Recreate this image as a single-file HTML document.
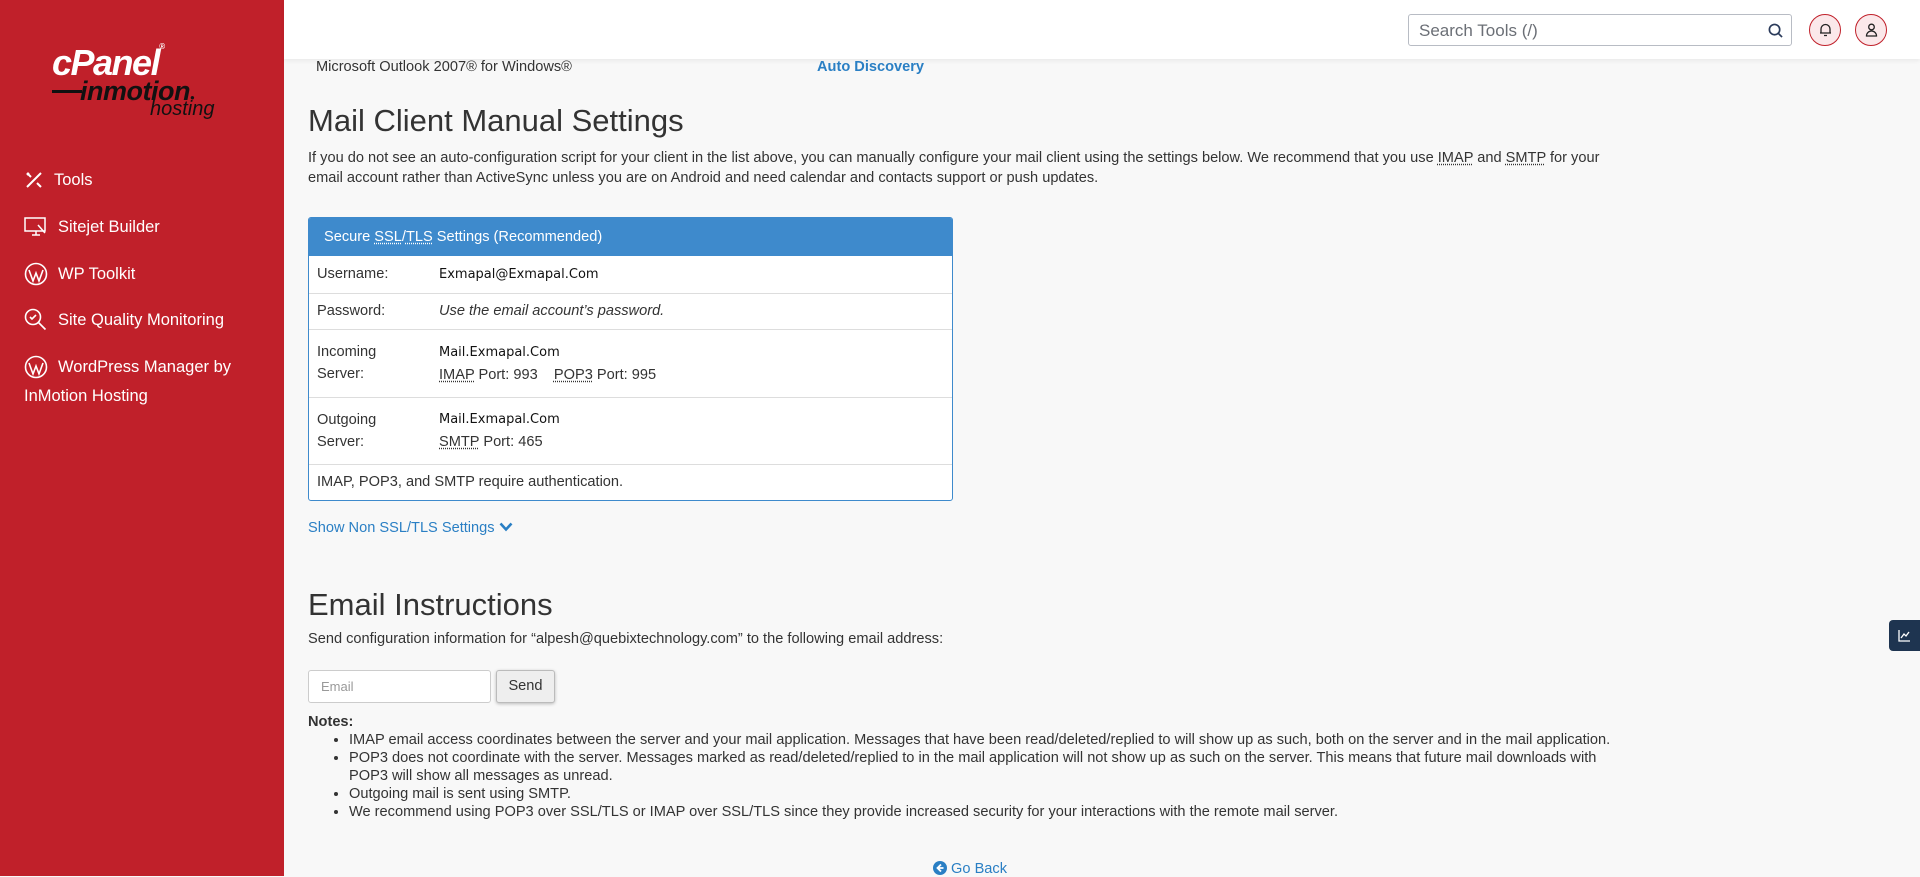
<!DOCTYPE html>
<html><head><meta charset="utf-8"><style>
*{box-sizing:border-box;margin:0;padding:0}
body{width:1920px;height:876px;overflow:hidden;background:#f8f8f8;font-family:"Liberation Sans","DejaVu Sans",sans-serif;color:#333;font-size:14.6px;position:relative}
.side{position:absolute;left:0;top:0;width:284px;height:876px;background:#c0202a;color:#fff}
.logo{position:absolute;left:52px;top:42px}
.nav{position:absolute;left:24px;font-size:16.5px;color:#fff;display:flex;align-items:center}
.nav svg{margin-right:10px}
.top{position:absolute;left:284px;top:0;right:0;height:59px;background:#fff;box-shadow:0 2px 4px rgba(0,0,0,.06)}
.search{position:absolute;top:14px;width:384px;height:32px;border:1px solid #b8bcc4;border-radius:3px;background:#fff;font-size:17px;color:#6b6f76;padding:6px 10px}
.circ{position:absolute;top:14px;width:32px;height:32px;border-radius:50%;border:1px solid #c0202a;background:#fbe8ea}
.main{position:absolute;left:308px;top:0;width:1320px}
a{color:#2a7fc4;text-decoration:none}
abbr{text-decoration:underline dotted;text-underline-offset:2px}
h1,h2{font-weight:normal;font-size:31px;color:#333;position:absolute;left:0}
table{border-collapse:collapse;width:100%}
.panel{position:absolute;left:0;top:217px;width:645px;border:1px solid #3e8acc;border-radius:3px;background:#fff;overflow:hidden}
.ph{background:#3e8acc;color:#fff;height:38px;line-height:38px;padding-left:15px;font-size:14.6px}
td{border-top:1px solid #ddd;padding:0 8px;font-size:14.6px;vertical-align:middle}
td.l{width:122px;color:#333}
.v{font-family:"DejaVu Sans",sans-serif;font-size:13px;color:#111}
.notes li{margin-left:41px;line-height:18px}
</style></head><body>
<div class="side">
 <div class="logo">
  <div style="font:italic bold 36px 'Liberation Sans',sans-serif;color:#fff;letter-spacing:-1.5px">cPanel<span style="font-size:8px;vertical-align:top">®</span></div>
  <div style="position:relative;font:italic bold 27px 'Liberation Sans',sans-serif;color:#111;margin-left:28px;margin-top:-8px;letter-spacing:-0.5px"><span style="position:absolute;left:-28px;top:14px;width:30px;height:3px;background:#111"></span>inmotion<span style="font-size:8px">●</span></div>
  <div style="font:italic 20px 'Liberation Sans',sans-serif;color:#111;margin-left:98px;margin-top:-9px">hosting</div>
 </div>
 <div class="nav" style="top:170px"><svg width="20" height="20" viewBox="0 0 20 20" fill="none" stroke="#fff" stroke-width="2"><path d="M3 17L17 3M3 3l4 4M13 13l4 4M5 3l-2 2"/></svg>Tools</div>
 <div class="nav" style="top:216px"><svg width="24" height="22" viewBox="0 0 24 22" fill="none" stroke="#fff" stroke-width="1.5"><rect x="1" y="2" width="20" height="13"/><path d="M8 19h8M12 15v4M14 9l7 8"/></svg>Sitejet Builder</div>
 <div class="nav" style="top:262px"><svg width="24" height="24" viewBox="0 0 24 24" fill="none" stroke="#fff" stroke-width="1.6"><circle cx="12" cy="12" r="10.5"/><path d="M5 8l4 11 3-8 3 8 4-11"/></svg>WP Toolkit</div>
 <div class="nav" style="top:308px"><svg width="24" height="24" viewBox="0 0 24 24" fill="none" stroke="#fff" stroke-width="1.6"><circle cx="9" cy="9" r="7.5"/><path d="M14.5 14.5l7 7M6 9l2 2 4-4"/></svg>Site Quality Monitoring</div>
 <div class="nav" style="top:355px"><svg width="24" height="24" viewBox="0 0 24 24" fill="none" stroke="#fff" stroke-width="1.6"><circle cx="12" cy="12" r="10.5"/><path d="M5 8l4 11 3-8 3 8 4-11"/></svg>WordPress Manager by</div>
 <div class="nav" style="top:387px">InMotion Hosting</div>
</div>
<div class="top">
 <div class="search" style="left:1124px">Search Tools (/)<svg style="position:absolute;right:8px;top:8px" width="15" height="15" viewBox="0 0 16 16" fill="none" stroke="#2a3a5a" stroke-width="1.8"><circle cx="7" cy="7" r="5.5"/><path d="M11 11l4 4"/></svg></div>
 <div class="circ" style="left:1525px"><svg style="margin:8px 0 0 9px" width="13" height="14" viewBox="0 0 13 14" fill="none" stroke="#222" stroke-width="1.3"><path d="M2 10V6a4.5 4.5 0 019 0v4zM1 10h11M5 12.5h3"/></svg></div>
 <div class="circ" style="left:1571px"><svg style="margin:8px 0 0 9px" width="13" height="14" viewBox="0 0 13 14" fill="none" stroke="#222" stroke-width="1.3"><circle cx="6.5" cy="4" r="2.8"/><path d="M1.5 13a5 5 0 0110 0z"/></svg></div>
</div>
<div class="main">
 <div style="position:absolute;left:8px;top:59px">Microsoft Outlook 2007® for Windows®</div>
 <div style="position:absolute;left:509px;top:59px;font-weight:bold"><a>Auto Discovery</a></div>
 <h1 style="top:103px">Mail Client Manual Settings</h1>
 <p style="position:absolute;top:148px;line-height:20px;width:1320px">If you do not see an auto-configuration script for your client in the list above, you can manually configure your mail client using the settings below. We recommend that you use <abbr>IMAP</abbr> and <abbr>SMTP</abbr> for your email account rather than ActiveSync unless you are on Android and need calendar and contacts support or push updates.</p>
 <div class="panel">
  <div class="ph">Secure <abbr>SSL</abbr>/<abbr>TLS</abbr> Settings (Recommended)</div>
  <table>
   <tr style="height:37px"><td class="l" style="border-top:0">Username:</td><td class="v" style="border-top:0">Exmapal@Exmapal.Com</td></tr>
   <tr style="height:36px"><td class="l">Password:</td><td style="font-style:italic">Use the email account’s password.</td></tr>
   <tr style="height:68px"><td class="l" style="line-height:22px">Incoming<br>Server:</td><td style="line-height:22px"><span class="v">Mail.Exmapal.Com</span><br><abbr>IMAP</abbr> Port: 993 &nbsp;&nbsp; <abbr>POP3</abbr> Port: 995</td></tr>
   <tr style="height:67px"><td class="l" style="line-height:22px">Outgoing<br>Server:</td><td style="line-height:22px"><span class="v">Mail.Exmapal.Com</span><br><abbr>SMTP</abbr> Port: 465</td></tr>
   <tr style="height:36px"><td colspan="2">IMAP, POP3, and SMTP require authentication.</td></tr>
  </table>
 </div>
 <div style="position:absolute;top:520px"><a>Show Non SSL/TLS Settings <svg width="14" height="10" viewBox="0 0 14 10" fill="none" stroke="#2a7fc4" stroke-width="2.6"><path d="M1.5 1.5l5.5 6 5.5-6"/></svg></a></div>
 <h2 style="top:587px">Email Instructions</h2>
 <div style="position:absolute;top:631px">Send configuration information for “alpesh@quebixtechnology.com” to the following email address:</div>
 <div style="position:absolute;top:670px;width:183px;height:33px;border:1px solid #ccc;border-radius:3px;background:#fff;color:#999;padding:8px 12px;font-size:13px">Email</div>
 <div style="position:absolute;left:188px;top:670px;width:59px;height:33px;border:1px solid #bbb;border-radius:3px;background:#eee;box-shadow:0 1px 3px rgba(0,0,0,.25);text-align:center;line-height:31px">Send</div>
 <div style="position:absolute;top:714px;font-weight:bold">Notes:</div>
 <ul class="notes" style="position:absolute;top:731px;width:1320px">
  <li>IMAP email access coordinates between the server and your mail application. Messages that have been read/deleted/replied to will show up as such, both on the server and in the mail application.</li>
  <li>POP3 does not coordinate with the server. Messages marked as read/deleted/replied to in the mail application will not show up as such on the server. This means that future mail downloads with POP3 will show all messages as unread.</li>
  <li>Outgoing mail is sent using SMTP.</li>
  <li>We recommend using POP3 over SSL/TLS or IMAP over SSL/TLS since they provide increased security for your interactions with the remote mail server.</li>
 </ul>
 <div style="position:absolute;left:625px;top:861px"><a><svg width="14" height="14" viewBox="0 0 14 14" style="vertical-align:-2px"><circle cx="7" cy="7" r="7" fill="#2a7fc4"/><path d="M8 3.5L4.5 7 8 10.5M4.5 7H10.5" stroke="#fff" stroke-width="1.8" fill="none"/></svg> Go Back</a></div>
</div>
<div style="position:absolute;left:1889px;top:620px;width:31px;height:31px;background:#1e3450;border-radius:4px 0 0 4px"><svg style="margin:9px" width="13" height="13" viewBox="0 0 13 13" fill="none" stroke="#fff" stroke-width="1.3"><path d="M1 1v11h11M3 9l3-4 2 2 3-4"/></svg></div>
</body></html>
